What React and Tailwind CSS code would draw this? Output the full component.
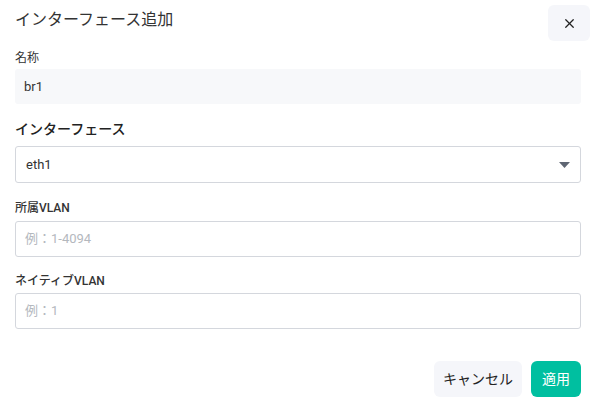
import { X } from 'lucide-react'

const font = { fontFamily: 'Roboto, "Noto Sans CJK JP", sans-serif' }

function Field({ label, placeholder, mt, gap }) {
  return (
    <>
      <div className={`${mt} text-[12px] font-medium leading-[16px] text-[#333]`}>{label}</div>
      <div
        className={`${gap} flex h-[36px] items-center rounded-[3px] border border-[#d4d7dd] pl-[9px] text-[13px] text-[#b4b8be]`}
      >
        {placeholder}
      </div>
    </>
  )
}

export default function App() {
  return (
    <div
      className="flex h-[412px] w-[595px] flex-col bg-white pl-[15px] pr-[14px] pt-[5px]"
      style={font}
    >
      <div className="flex items-start justify-between">
        <h1 className="text-[16px] leading-[30px] text-[#333]">インターフェース追加</h1>
        <button className="mr-[-9px] flex h-[36px] w-[42px] items-center justify-center rounded-md bg-[#f5f6fa] text-[#222]">
          <X size={15} strokeWidth={2} />
        </button>
      </div>

      <div className="mt-[9px] text-[12px] leading-[16px] text-[#333]">名称</div>
      <div className="mt-[3px] flex h-[35px] items-center rounded-[3px] bg-[#f7f8fa] pl-[9px] text-[13px] text-[#333]">
        br1
      </div>

      <div className="mt-[16px] text-[14px] font-medium leading-[18px] text-[#222]">インターフェース</div>
      <div className="mt-[8px] flex h-[37px] items-center justify-between rounded-[3px] border border-[#d4d7dd] pl-[10px] pr-[10px] text-[13px] text-[#333]">
        <span>eth1</span>
        <svg width="11" height="6" viewBox="0 0 11 6" className="mt-[1px]">
          <path d="M0 0h11L5.5 6z" fill="#5f6673" />
        </svg>
      </div>

      <Field label="所属VLAN" placeholder="例：1-4094" mt="mt-[17px]" gap="mt-[5px]" />
      <Field label="ネイティブVLAN" placeholder="例：1" mt="mt-[16px]" gap="mt-[4px]" />

      <div className="mt-[32px] flex justify-end gap-[9px]">
        <button className="h-[36px] w-[88px] rounded-md bg-[#f5f6fa] text-[14px] text-[#222]">キャンセル</button>
        <button className="h-[36px] w-[50px] rounded-md bg-[#00bfa0] text-[14px] text-white">適用</button>
      </div>
    </div>
  )
}
